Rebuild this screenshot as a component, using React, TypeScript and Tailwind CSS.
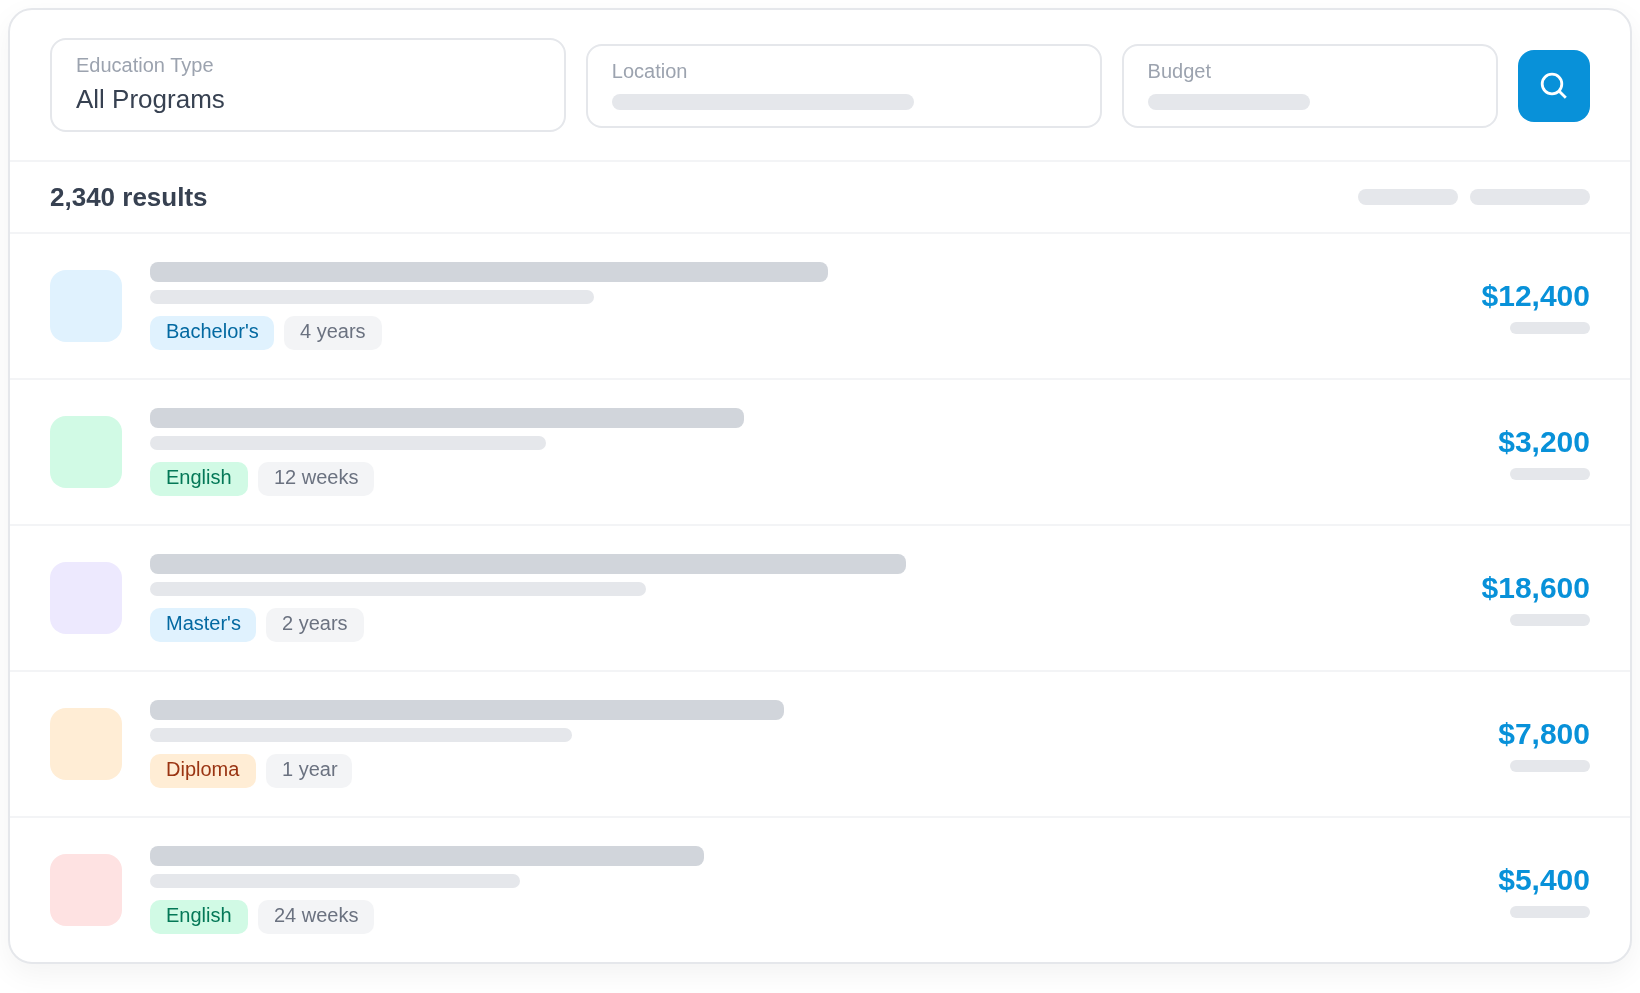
import React from 'react';

const rows = [
  {
    thumb: 'bg-[#e0f2fe]',
    title: 'w-[678px]',
    sub: 'w-[444px]',
    tag: "Bachelor's",
    tagClass: 'w-[124px] bg-[#e0f2fe] text-[#0369a1]',
    duration: '4 years',
    durationClass: 'w-[98px]',
    price: '$12,400',
  },
  {
    thumb: 'bg-[#d1fae5]',
    title: 'w-[594px]',
    sub: 'w-[396px]',
    tag: 'English',
    tagClass: 'w-[98px] bg-[#d1fae5] text-[#047857]',
    duration: '12 weeks',
    durationClass: 'w-[116px]',
    price: '$3,200',
  },
  {
    thumb: 'bg-[#ede9fe]',
    title: 'w-[756px]',
    sub: 'w-[496px]',
    tag: "Master's",
    tagClass: 'w-[106px] bg-[#e0f2fe] text-[#0369a1]',
    duration: '2 years',
    durationClass: 'w-[98px]',
    price: '$18,600',
  },
  {
    thumb: 'bg-[#ffedd5]',
    title: 'w-[634px]',
    sub: 'w-[422px]',
    tag: 'Diploma',
    tagClass: 'w-[106px] bg-[#ffedd5] text-[#9a3412]',
    duration: '1 year',
    durationClass: 'w-[86px]',
    price: '$7,800',
  },
  {
    thumb: 'bg-[#fee2e2]',
    title: 'w-[554px]',
    sub: 'w-[370px]',
    tag: 'English',
    tagClass: 'w-[98px] bg-[#d1fae5] text-[#047857]',
    duration: '24 weeks',
    durationClass: 'w-[116px]',
    price: '$5,400',
  },
];

function SearchIcon() {
  return (
    <svg width="32" height="32" viewBox="0 0 32 32" fill="none" stroke="white" strokeWidth="2.8">
      <circle cx="14" cy="14" r="9.8" />
      <path d="M21 21l6.8 6.8" />
    </svg>
  );
}

export default function App() {
  return (
    <div className="min-h-[993px] p-2 font-['Liberation_Sans',sans-serif] will-change-transform">
      <div className="bg-white border-2 border-[#e5e7eb] rounded-3xl shadow-[0_10px_30px_rgba(0,0,0,0.05)] overflow-hidden">
        <div className="flex items-center gap-5 px-10 py-7 border-b-2 border-[#f3f4f6]">
          <div className="flex-1 h-[94px] border-2 border-[#e5e7eb] rounded-2xl px-6 pt-[13px]">
            <div className="text-[20px] leading-[24px] text-[#9ca3af]">Education Type</div>
            <div className="text-[26px] leading-[36px] mt-1 text-[#374151]">All Programs</div>
          </div>
          <div className="flex-1 h-[84px] mt-[2px] border-2 border-[#e5e7eb] rounded-2xl px-6 pt-[13px]">
            <div className="text-[20px] leading-[24px] text-[#9ca3af]">Location</div>
            <div className="w-[302px] h-4 mt-[11px] rounded-lg bg-[#e5e7eb]"></div>
          </div>
          <div className="flex-[0.6995] h-[84px] mt-[2px] border-2 border-[#e5e7eb] rounded-2xl px-6 pt-[13px]">
            <div className="text-[20px] leading-[24px] text-[#9ca3af]">Budget</div>
            <div className="w-1/2 h-4 mt-[11px] rounded-lg bg-[#e5e7eb]"></div>
          </div>
          <div className="w-[72px] h-[72px] mt-[2px] rounded-2xl bg-[#0891d9] flex items-center justify-center">
            <SearchIcon />
          </div>
        </div>

        <div className="h-[72px] flex items-center justify-between px-10 border-b-2 border-[#f3f4f6]">
          <div className="text-[26px] font-bold text-[#374151]">2,340 results</div>
          <div className="flex gap-3">
            <div className="w-[100px] h-4 rounded-lg bg-[#e5e7eb]"></div>
            <div className="w-[120px] h-4 rounded-lg bg-[#e5e7eb]"></div>
          </div>
        </div>

        {rows.map((row, index) => (
          <div
            key={index}
            className="flex items-center gap-7 px-10 py-7 border-b-2 border-[#f3f4f6] last:border-b-0"
          >
            <div className={`w-[72px] h-[72px] rounded-2xl shrink-0 ${row.thumb}`}></div>
            <div className="flex-1">
              <div className={`h-5 rounded-lg bg-[#d1d5db] ${row.title}`}></div>
              <div className={`h-[14px] mt-2 rounded-lg bg-[#e5e7eb] ${row.sub}`}></div>
              <div className="flex gap-[10px] mt-3">
                <span className={`h-[34px] pl-4 rounded-[10px] text-[20px] leading-[30px] whitespace-nowrap ${row.tagClass}`}>
                  {row.tag}
                </span>
                <span
                  className={`h-[34px] pl-4 rounded-[10px] text-[20px] leading-[30px] whitespace-nowrap bg-[#f3f4f6] text-[#6b7280] ${row.durationClass}`}
                >
                  {row.duration}
                </span>
              </div>
            </div>
            <div className="flex flex-col items-end">
              <div className="text-[30px] leading-[36px] font-bold text-[#0891d9]">{row.price}</div>
              <div className="w-20 h-3 mt-2 rounded-md bg-[#e5e7eb]"></div>
            </div>
          </div>
        ))}
      </div>
    </div>
  );
}
